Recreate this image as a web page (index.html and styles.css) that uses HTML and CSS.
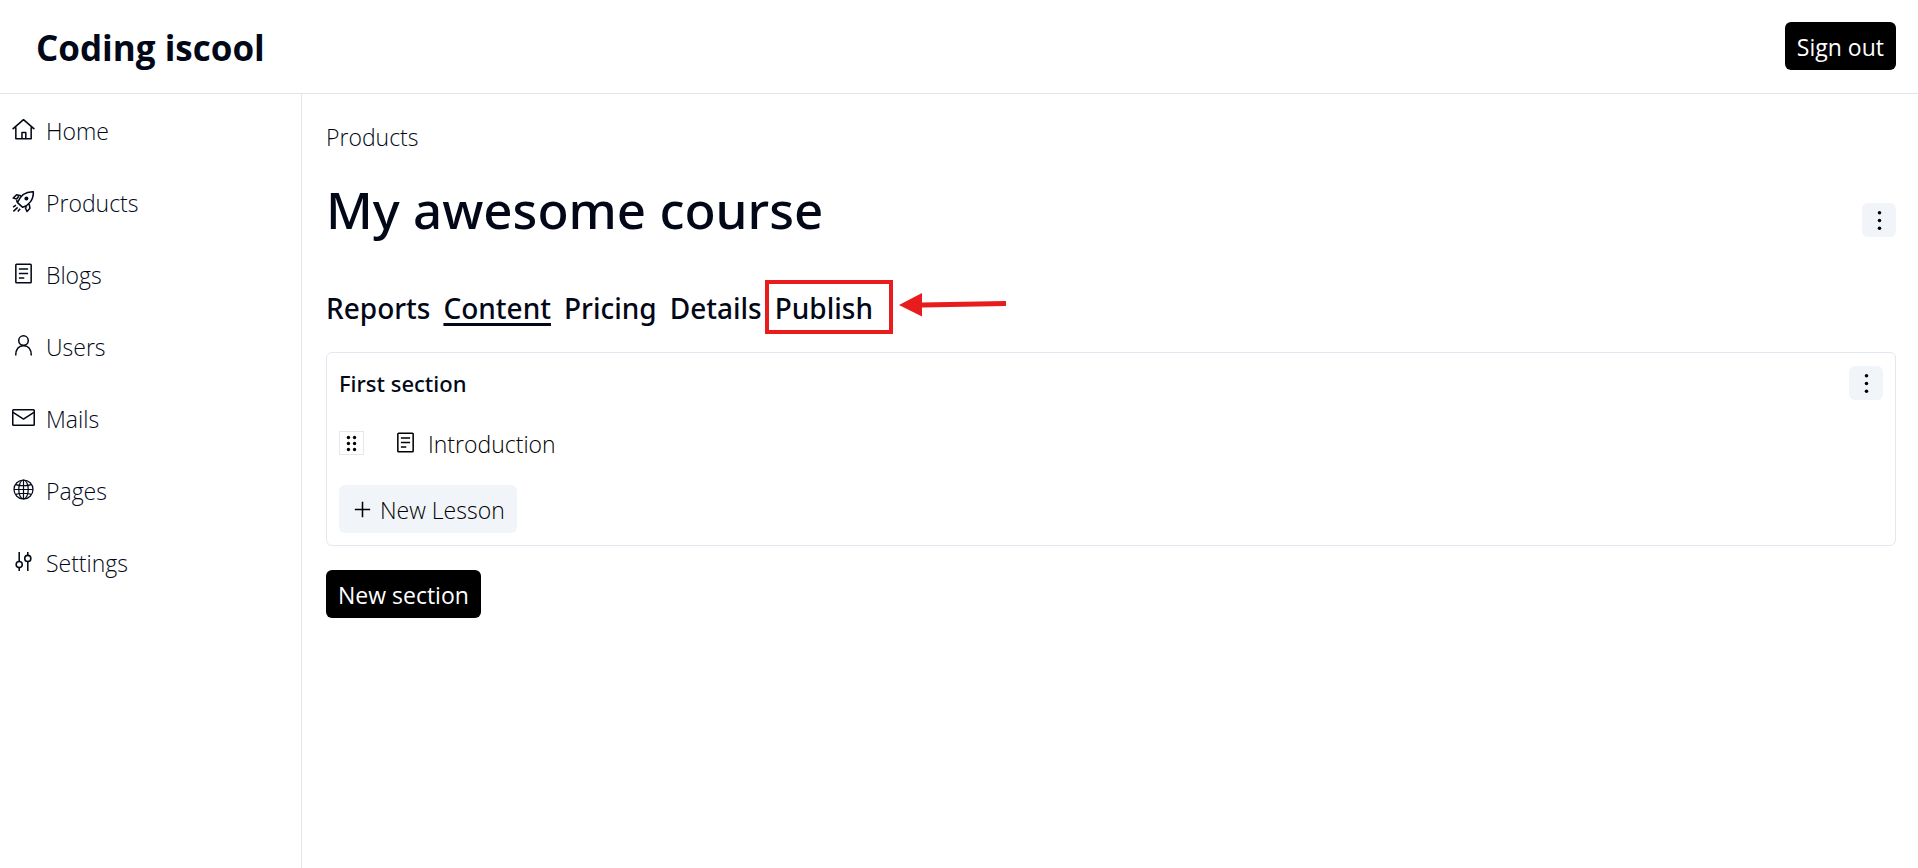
FILE: index.html
```html
<!DOCTYPE html>
<html lang="en">
<head>
<meta charset="utf-8">
<meta name="viewport" content="width=device-width, initial-scale=1">
<title>My awesome course</title>
<link rel="stylesheet" href="styles.css">
</head>
<body>
<svg class="sprite" aria-hidden="true">
  <symbol id="doc" viewBox="0 0 15 15"><rect x="2.5" y="1.5" width="10" height="12" rx=".5"/><path d="M4.5 4.5h6M4.5 7.5h6M4.5 10.5h3.5"/></symbol>
  <symbol id="dots" viewBox="0 0 15 15"><g class="solid"><circle cx="7.5" cy="2.5" r="1.15"/><circle cx="7.5" cy="7.5" r="1.15"/><circle cx="7.5" cy="12.5" r="1.15"/></g></symbol>
</svg>
<header class="topbar">
  <a class="brand" href="#">Coding iscool</a>
  <button class="btn btn-dark" type="button">Sign out</button>
</header>
<div class="shell">
  <nav class="sidebar" aria-label="Main">
    <a href="#"><svg class="icon" viewBox="0 0 15 15"><path d="M.4 7.3 7.5 1.1l7.1 6.2M2.5 6v7.5h10V6M6.5 13.5v-4h2.5v4"/></svg>Home</a>
    <a href="#"><svg class="icon" viewBox="0 0 15 15"><path d="M3.6 8.2C5 4.6 8.2.9 13.9 1.1c.3 5.4-3.1 8.9-6.9 10.2zM5.8 3.7 3 3.1.8 5.3l2.3.6M3.1 5.9l1.3-1.8M2.9 6.6l.7 1.6M11.2 9.2l.5 2.7-1.9 2.1-1.2-2.6M7 11.3l-1-.9M8.6 11.4l1.2-.7M2.6 9.9l-1.9 1.3M3.7 11.3.9 13.9M5.3 12.2l-1.5 1.8"/><circle class="solid" cx="9.4" cy="5.6" r="1.3"/></svg>Products</a>
    <a href="#"><svg class="icon"><use href="#doc"/></svg>Blogs</a>
    <a href="#"><svg class="icon" viewBox="0 0 15 15"><circle cx="7.5" cy="4.3" r="3.1"/><path d="M2.4 14c0-3.9 1.9-6.4 5.1-6.4s5.1 2.5 5.1 6.4"/></svg>Users</a>
    <a href="#"><svg class="icon" viewBox="0 0 15 15"><rect x=".5" y="2.5" width="14" height="10" rx=".5"/><path d="m.7 4.1 6.8 4.4 6.8-4.4"/></svg>Mails</a>
    <a href="#"><svg class="icon thin" viewBox="0 0 15 15"><circle cx="7.5" cy="7.5" r="6.2"/><ellipse cx="7.5" cy="7.5" rx="3.1" ry="6.2"/><path d="M7.5 1.3v12.4M1.3 7.5h12.4M2.4 4.3q5.1 1.5 10.2 0M2.4 10.7q5.1-1.5 10.2 0"/></svg>Pages</a>
    <a href="#"><svg class="icon" viewBox="0 0 15 15"><circle cx="4.7" cy="9.5" r="2"/><circle cx="10.3" cy="5.5" r="2"/><path d="M4.7 1.3v6.2M4.7 11.5v2.2M10.3 1.3v2.2M10.3 7.5v6.2"/></svg>Settings</a>
  </nav>
  <main class="content">
    <a class="crumb" href="#">Products</a>
    <div class="heading">
      <h1>My awesome course</h1>
      <button class="menu" type="button" aria-label="Course options"><svg class="icon"><use href="#dots"/></svg></button>
    </div>
    <nav class="tabs" aria-label="Course">
      <a href="#">Reports</a>
      <a class="active" href="#">Content</a>
      <a href="#">Pricing</a>
      <a href="#">Details</a>
      <a class="marked" href="#">Publish
        <svg class="arrow" viewBox="0 0 107 24" aria-hidden="true"><path d="M0 12 23 0v9.5L107 8v5L23 14.5v9z"/></svg>
      </a>
    </nav>
    <section class="card">
      <div class="card-head">
        <h2>First section</h2>
        <button class="menu" type="button" aria-label="Section options"><svg class="icon"><use href="#dots"/></svg></button>
      </div>
      <div class="lesson">
        <button class="handle" type="button" aria-label="Reorder"><svg class="icon" viewBox="0 0 15 15"><g class="solid"><circle cx="5.5" cy="3.6" r="1.1"/><circle cx="9.5" cy="3.6" r="1.1"/><circle cx="5.5" cy="7.5" r="1.1"/><circle cx="9.5" cy="7.5" r="1.1"/><circle cx="5.5" cy="11.4" r="1.1"/><circle cx="9.5" cy="11.4" r="1.1"/></g></svg></button>
        <a href="#"><svg class="icon"><use href="#doc"/></svg>Introduction</a>
      </div>
      <button class="btn btn-light" type="button"><svg class="icon" viewBox="0 0 15 15"><path d="M7.5 2.5v10M2.5 7.5h10"/></svg>New Lesson</button>
    </section>
    <button class="btn btn-dark" type="button">New section</button>
  </main>
</div>
</body>
</html>
```
FILE: styles.css
```css
* { box-sizing: border-box; }
body {
  margin: 0;
  min-height: 100vh;
  display: flex;
  flex-direction: column;
  background: #fff;
  color: #020817;
  font: 300 23px/36px "Open Sans", "Noto Sans", sans-serif;
}
a { color: inherit; text-decoration: none; }
button { font: inherit; color: #000; border: 0; padding: 0; cursor: pointer; }
h1, h2 { margin: 0; }
.sprite { position: absolute; width: 0; height: 0; }
.icon {
  width: 23px;
  height: 23px;
  flex: none;
  fill: none;
  stroke: currentColor;
  stroke-width: 1;
  stroke-linejoin: round;
}
.thin { stroke-width: .8; }
.solid { fill: currentColor; stroke: none; }

.topbar {
  display: flex;
  align-items: center;
  justify-content: space-between;
  padding: 22px 22px 23px 36px;
  border-bottom: 1px solid #e2e4ee;
}
.brand { padding-top: 4px; font-size: 35px; line-height: 44px; font-weight: 700; }
.btn {
  display: inline-flex;
  align-items: center;
  height: 48px;
  padding: 2px 12px 0;
  border-radius: 6px;
}
.btn-dark { background: #000; color: #fff; font-weight: 400; }
.btn-light { background: #f1f5f9; gap: 6px; }
.btn-light .icon { margin-bottom: 2px; }

.shell { display: flex; flex: 1; }
.sidebar {
  width: 302px;
  flex: none;
  display: flex;
  flex-direction: column;
  gap: 36px;
  padding: 19px 12px;
  border-right: 1px solid #e2e4ee;
}
.sidebar a, .lesson a { display: flex; align-items: center; gap: 11px; }
.sidebar .icon, .lesson a .icon { margin-bottom: 3px; }

.content {
  flex: 1;
  display: flex;
  flex-direction: column;
  align-items: flex-start;
  padding: 25px 22px 24px 24px;
}
.heading {
  display: flex;
  align-items: flex-end;
  justify-content: space-between;
  align-self: stretch;
  margin: 22px 0 42px;
}
h1, h2, .tabs { font-family: "Noto Sans", "Open Sans", sans-serif; font-weight: 500; }
h1 { padding-top: 4px; font-size: 51px; line-height: 56px; }
.menu {
  display: grid;
  place-items: center;
  width: 34px;
  height: 34px;
  border-radius: 6px;
  background: #f1f5f9;
}
.tabs { display: flex; gap: 13px; font-size: 28px; line-height: 58px; }
.active { text-decoration: underline; text-decoration-thickness: 3px; text-underline-offset: 4px; }
.marked { position: relative; }
.marked::after {
  content: "";
  position: absolute;
  inset: 1px -20px 3px -10px;
  border: 4px solid #e81c1c;
}
.arrow {
  position: absolute;
  left: calc(100% + 26px);
  top: 14px;
  width: 107px;
  height: 24px;
  fill: #e81c1c;
}
.card {
  align-self: stretch;
  margin: 15px 0 24px;
  padding: 12px;
  border: 1px solid #e2e8f0;
  border-radius: 6px;
}
.card-head { display: flex; justify-content: space-between; align-items: center; }
h2 { font-size: 22px; line-height: 36px; }
.lesson { display: flex; align-items: center; gap: 30px; padding: 24px 0; color: #000; }
.lesson a { padding-top: 2px; line-height: 34px; }
.handle {
  display: grid;
  place-items: center;
  width: 25px;
  height: 24px;
  border: 1px solid #e2e8f0;
  background: #fff;
}
```
